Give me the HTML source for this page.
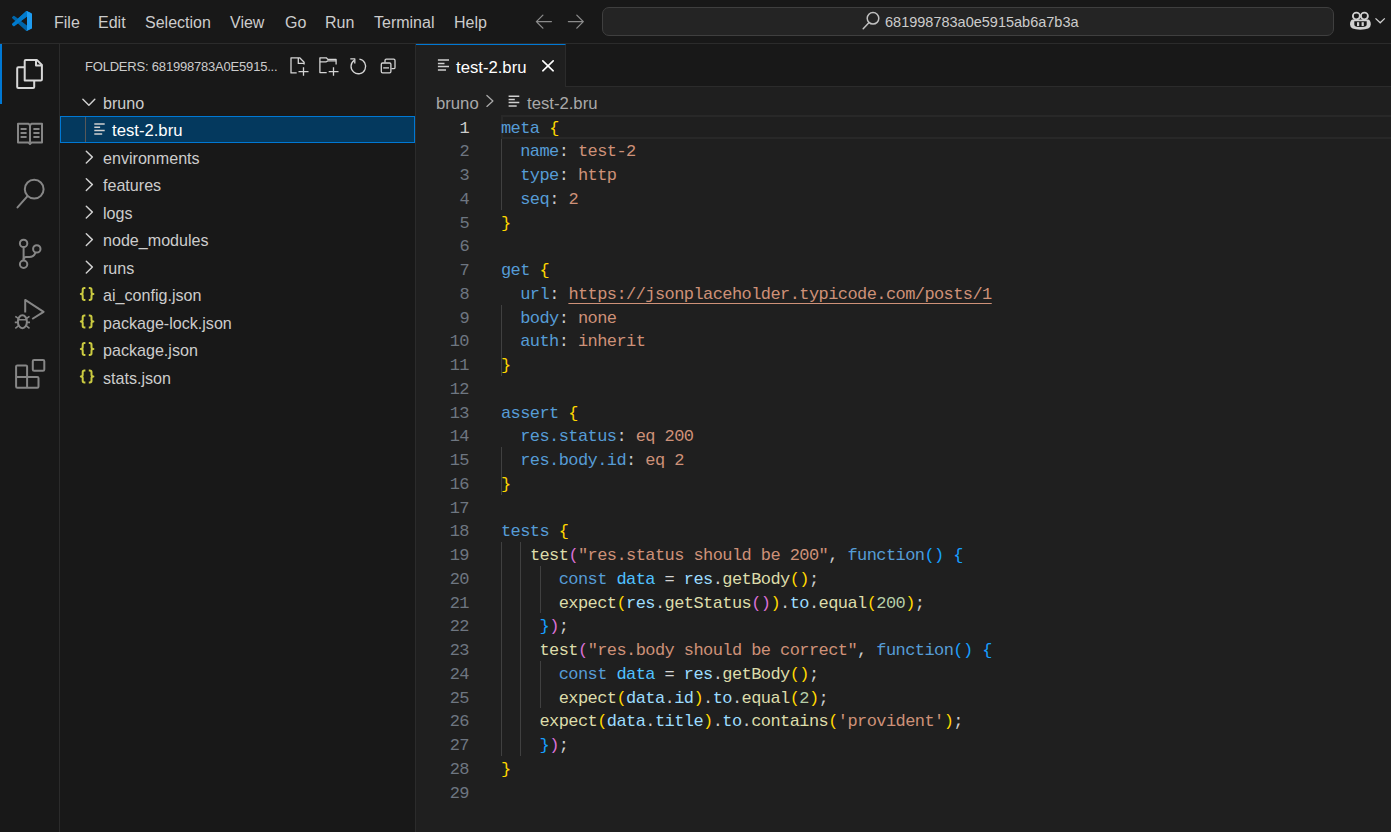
<!DOCTYPE html>
<html><head><meta charset="utf-8">
<style>
*{margin:0;padding:0;box-sizing:border-box}
html,body{width:1391px;height:832px;overflow:hidden;background:#181818;font-family:"Liberation Sans",sans-serif;color:#cccccc}
.a{position:absolute}
.ui{white-space:nowrap;font-size:16px;color:#cccccc}
#title{left:0;top:0;width:1391px;height:44px;background:#181818;border-bottom:1px solid #2b2b2b}
#search{left:602px;top:7px;width:732px;height:29px;background:#242424;border:1px solid #3f3f3f;border-radius:7px}
#act{left:0;top:44px;width:60px;height:788px;background:#181818;border-right:1px solid #2b2b2b}
#side{left:60px;top:44px;width:356px;height:788px;background:#181818;border-right:1px solid #2b2b2b}
#tabs{left:416px;top:44px;width:975px;height:43px;background:#181818;border-bottom:1px solid #2b2b2b}
#tab{left:416px;top:44px;width:150px;height:43px;background:#1f1f1f;border-top:1px solid #0078d4;border-right:1px solid #2b2b2b}
#editor{left:416px;top:87px;width:975px;height:745px;background:#1f1f1f}
.m{top:1.3px;height:43px;line-height:43px}
.row{left:103px;height:27.5px;line-height:27.5px;font-size:16.1px}
.code{font-family:"Liberation Mono",monospace;font-size:17px;letter-spacing:-0.58px}
.code div{white-space:pre;height:23.75px}
.ln{left:416px;width:53px;text-align:right;color:#6e7681;line-height:23.75px}
.cl{left:501px;line-height:23.75px;color:#cccccc}
.k{color:#569cd6}.s{color:#ce9178}.f{color:#dcdcaa}.v{color:#9cdcfe}.c{color:#4fc1ff}.n{color:#b5cea8}
.b1{color:#ffd700}.b2{color:#da70d6}.b3{color:#179fff}.p{color:#d4d4d4}
.g{width:1px;background:#404040}
</style></head><body>
<div id="title" class="a"></div>
<div id="search" class="a"></div>
<div id="act" class="a"></div>
<div class="a" style="left:0;top:44px;width:2px;height:60px;background:#0078d4"></div>
<div id="side" class="a"></div>
<div id="tabs" class="a"></div>
<div id="tab" class="a"></div>
<div id="editor" class="a"></div>

<!-- menu -->
<div class="a ui m" style="left:54px">File</div>
<div class="a ui m" style="left:98px">Edit</div>
<div class="a ui m" style="left:145px">Selection</div>
<div class="a ui m" style="left:230px">View</div>
<div class="a ui m" style="left:285px">Go</div>
<div class="a ui m" style="left:325px">Run</div>
<div class="a ui m" style="left:374px">Terminal</div>
<div class="a ui m" style="left:454px">Help</div>
<div class="a ui" style="left:885px;top:1px;height:43px;line-height:43px;font-size:14.5px">681998783a0e5915ab6a7b3a</div>

<!-- sidebar header -->
<div class="a ui" style="left:85px;top:45px;height:44px;line-height:44px;font-size:13px;letter-spacing:-0.2px">FOLDERS: 681998783A0E5915...</div>

<!-- explorer rows -->
<div class="a" style="left:60px;top:116px;width:355px;height:27px;background:#04395e;border:1px solid #0078d4"></div>
<div class="a g" style="left:85px;top:117px;height:25px;background:#585858"></div>
<div class="a ui row" style="top:89.5px">bruno</div>
<div class="a ui row" style="top:117px;left:112px;color:#ffffff;font-size:16.7px">test-2.bru</div>
<div class="a ui row" style="top:144.5px">environments</div>
<div class="a ui row" style="top:172px">features</div>
<div class="a ui row" style="top:199.5px">logs</div>
<div class="a ui row" style="top:227px">node_modules</div>
<div class="a ui row" style="top:254.5px">runs</div>
<div class="a ui row" style="top:282px">ai_config.json</div>
<div class="a ui row" style="top:309.5px">package-lock.json</div>
<div class="a ui row" style="top:337px">package.json</div>
<div class="a ui row" style="top:364.5px">stats.json</div>

<!-- tab + breadcrumbs -->
<div class="a ui" style="left:456px;top:46px;height:43px;line-height:43px;font-size:16.7px;color:#ffffff">test-2.bru</div>
<div class="a ui" style="left:436px;top:89px;height:29px;line-height:29px;font-size:16.7px;color:#a9a9a9">bruno</div>
<div class="a ui" style="left:527px;top:89px;height:29px;line-height:29px;font-size:16.7px;color:#a9a9a9">test-2.bru</div>

<!-- indent guides -->
<div class="a g" style="left:501px;top:139px;height:71px"></div>
<div class="a g" style="left:501px;top:305px;height:71px"></div>
<div class="a g" style="left:501px;top:447px;height:48px"></div>
<div class="a g" style="left:501px;top:542px;height:214px"></div>
<div class="a g" style="left:520px;top:542px;height:214px"></div>
<div class="a g" style="left:540px;top:566px;height:47px"></div>
<div class="a g" style="left:540px;top:661px;height:47px"></div>

<!-- current line highlight -->
<div class="a" style="left:501px;top:115px;width:890px;height:24px;border:2px solid #282828;border-right:none"></div>

<!-- line numbers -->
<div class="a code ln" style="top:116.5px">
<div style="color:#cccccc">1</div><div>2</div><div>3</div><div>4</div><div>5</div><div>6</div><div>7</div><div>8</div><div>9</div><div>10</div><div>11</div><div>12</div><div>13</div><div>14</div><div>15</div><div>16</div><div>17</div><div>18</div><div>19</div><div>20</div><div>21</div><div>22</div><div>23</div><div>24</div><div>25</div><div>26</div><div>27</div><div>28</div><div>29</div>
</div>

<div class="a code cl" style="top:116.5px">
<div><span class="k">meta</span> <span class="b1">{</span></div>
<div>  <span class="k">name</span>: <span class="s">test-2</span></div>
<div>  <span class="k">type</span>: <span class="s">http</span></div>
<div>  <span class="k">seq</span>: <span class="s">2</span></div>
<div><span class="b1">}</span></div>
<div> </div>
<div><span class="k">get</span> <span class="b1">{</span></div>
<div>  <span class="k">url</span>: <span class="s" style="text-decoration:underline;text-underline-offset:4px;text-decoration-skip-ink:none">https://jsonplaceholder.typicode.com/posts/1</span></div>
<div>  <span class="k">body</span>: <span class="s">none</span></div>
<div>  <span class="k">auth</span>: <span class="s">inherit</span></div>
<div><span class="b1">}</span></div>
<div> </div>
<div><span class="k">assert</span> <span class="b1">{</span></div>
<div>  <span class="k">res.status</span>: <span class="s">eq 200</span></div>
<div>  <span class="k">res.body.id</span>: <span class="s">eq 2</span></div>
<div><span class="b1">}</span></div>
<div> </div>
<div><span class="k">tests</span> <span class="b1">{</span></div>
<div>   <span class="f">test</span><span class="b2">(</span><span class="s">"res.status should be 200"</span>, <span class="k">function</span><span class="b3">()</span> <span class="b3">{</span></div>
<div>      <span class="k">const</span> <span class="c">data</span> <span class="p">=</span> <span class="v">res</span>.<span class="f">getBody</span><span class="b1">()</span>;</div>
<div>      <span class="f">expect</span><span class="b1">(</span><span class="v">res</span>.<span class="f">getStatus</span><span class="b2">()</span><span class="b1">)</span>.<span class="v">to</span>.<span class="f">equal</span><span class="b1">(</span><span class="n">200</span><span class="b1">)</span>;</div>
<div>    <span class="b3">}</span><span class="b2">)</span>;</div>
<div>    <span class="f">test</span><span class="b2">(</span><span class="s">"res.body should be correct"</span>, <span class="k">function</span><span class="b3">()</span> <span class="b3">{</span></div>
<div>      <span class="k">const</span> <span class="c">data</span> <span class="p">=</span> <span class="v">res</span>.<span class="f">getBody</span><span class="b1">()</span>;</div>
<div>      <span class="f">expect</span><span class="b1">(</span><span class="v">data</span>.<span class="v">id</span><span class="b1">)</span>.<span class="v">to</span>.<span class="f">equal</span><span class="b1">(</span><span class="n">2</span><span class="b1">)</span>;</div>
<div>    <span class="f">expect</span><span class="b1">(</span><span class="v">data</span>.<span class="v">title</span><span class="b1">)</span>.<span class="v">to</span>.<span class="f">contains</span><span class="b1">(</span><span class="s">'provident'</span><span class="b1">)</span>;</div>
<div>    <span class="b3">}</span><span class="b2">)</span>;</div>
<div><span class="b1">}</span></div>
<div> </div>
</div>

<!-- ICON OVERLAY -->
<svg class="a" style="left:0;top:0" width="1391" height="832" viewBox="0 0 1391 832" fill="none">
<!-- vscode logo -->
<g transform="translate(12,11) scale(0.2)">
<path fill="#0065a9" d="M96.46 10.8 75.86.87a6.23 6.23 0 0 0-7.1 1.2L29.35 38.04 12.19 25.01a4.16 4.16 0 0 0-5.32.24L1.36 30.26a4.16 4.16 0 0 0 0 6.16L16.23 50 1.36 63.58a4.16 4.16 0 0 0 0 6.16l5.51 5.01a4.16 4.16 0 0 0 5.32.24l17.16-13.03 39.41 35.96a6.22 6.22 0 0 0 7.1 1.2l20.6-9.92A6.25 6.25 0 0 0 100 83.6V16.4a6.25 6.25 0 0 0-3.54-5.6zM75.02 72.7 45.11 50l29.91-22.7z"/>
<path fill="#007acc" d="M96.46 10.8 75.86.87a6.23 6.23 0 0 0-7.1 1.2L1.36 63.58a4.16 4.16 0 0 0 0 6.16l5.51 5.01a4.16 4.16 0 0 0 5.32.24L93.39 13.23A4.16 4.16 0 0 1 100 16.4v-.2a6.25 6.25 0 0 0-3.54-5.4z"/>
<path fill="#1f9cf0" d="M75.86 99.13a6.22 6.22 0 0 1-7.1-1.2c2.3 2.3 6.24.67 6.24-2.58V4.65c0-3.25-3.94-4.88-6.24-2.58a6.23 6.23 0 0 1 7.1-1.2l20.6 9.91A6.25 6.25 0 0 1 100 16.4v67.2a6.25 6.25 0 0 1-3.54 5.62z"/>
</g>
<!-- nav arrows -->
<g stroke="#8b8b8b" stroke-width="1.3" stroke-linecap="round" stroke-linejoin="round">
<path d="M542.9 15.1 536.4 21.6 542.9 28.1M536.4 21.6H551.4"/>
<path d="M576.8 15.1 583.3 21.6 576.8 28.1M568.4 21.6H583.3"/>
</g>
<!-- search icon -->
<g stroke="#c0c0c0" stroke-width="1.5" stroke-linecap="round">
<circle cx="873" cy="18.3" r="5.8"/>
<path d="M868.6 22.9 863.2 28.8"/>
</g>
<!-- copilot -->
<g fill="#d0d0d0">
<path fill-rule="evenodd" d="M1350 24.6Q1350 20.4 1352.6 19.6H1368.2Q1370.8 20.4 1370.8 24.6Q1370.8 29.8 1360.4 29.8Q1350 29.8 1350 24.6ZM1354.3 21.3H1366.7V24.4Q1366.7 27 1360.5 27Q1354.3 27 1354.3 24.4Z"/>
<rect x="1357" y="22.2" width="2.2" height="3.9"/>
<rect x="1361.6" y="22.2" width="2.2" height="3.9"/>
</g>
<g stroke="#d0d0d0" fill="none">
<ellipse cx="1356.4" cy="16" rx="3.5" ry="3.35" stroke-width="1.9"/>
<ellipse cx="1364.4" cy="16" rx="3.5" ry="3.35" stroke-width="1.9"/>
<path d="M1375.5 18.4 1380.2 22.8 1384.8 18.4" stroke-width="1.3"/>
</g>
<!-- activity bar icons -->
<g stroke="#d7d7d7" stroke-width="2" stroke-linejoin="round">
<path d="M24.7 80.6V61Q24.7 59.9 25.8 59.9H36.8L41.9 65V79.5Q41.9 80.6 40.8 80.6Z"/>
<path d="M36 60V65.6H42"/>
<path d="M24.7 67.3H18.3Q17.2 67.3 17.2 68.4V86.9Q17.2 88 18.3 88H33.1Q34.2 88 34.2 86.9V80.6"/>
</g>
<g stroke="#868686" stroke-width="2" stroke-linejoin="round">
<path d="M18 123.8H28.5L30 125.3 31.5 123.8H42V142.5H31.5L30 144 28.5 142.5H18Z"/>
<path d="M30 125V142.6"/>
<path d="M20.6 129H26.6M20.6 133H26.6M20.6 137H26.6M33.4 129H39.5M33.4 133H39.5M33.4 137H39.5"/>
</g>
<g stroke="#868686" stroke-width="2" stroke-linecap="round">
<circle cx="34.2" cy="189.2" r="9.4"/>
<path d="M27.5 196.2 17.5 207.4"/>
</g>
<g stroke="#868686" stroke-width="2">
<circle cx="23.6" cy="243.4" r="3.7"/>
<circle cx="23.6" cy="264.3" r="3.7"/>
<circle cx="36.8" cy="248.9" r="3.7"/>
<path d="M23.6 247.1V260.6"/>
<path d="M35.6 252.4Q34 256.9 29.5 256.9H26Q23.6 256.9 23.6 259.5"/>
</g>
<g stroke="#868686" stroke-width="2" stroke-linejoin="round">
<path d="M25.2 312.4V299.9L43.6 311.8 32.2 319"/>
<ellipse cx="22.4" cy="321.7" rx="4.5" ry="6.5"/>
<path d="M18 319.8H27M15.3 316.3 18.6 318.6M29.5 316.3 26.2 318.6M14.8 322.4H17.8M27 322.4H30M15.3 328.3 18.4 325.9M29.5 328.3 26.4 325.9" stroke-width="1.6"/>
</g>
<g stroke="#868686" stroke-width="2" stroke-linejoin="round">
<path d="M16.1 376.9V366.6Q16.1 365.4 17.3 365.4H25.9Q27.1 365.4 27.1 366.6V376.9H37.3Q38.5 376.9 38.5 378.1V386.6Q38.5 387.8 37.3 387.8H17.3Q16.1 387.8 16.1 386.6V376.9H27.1V387.8"/>
<rect x="32.8" y="359.9" width="11.5" height="10.9" rx="1.3"/>
</g>

<!-- explorer toolbar -->
<g stroke="#d4d4d4" stroke-width="1.3" stroke-linejoin="round">
<path d="M296.7 72.9H291V57.8H299.7L304.1 62.2V64.5"/>
<path d="M298.3 57.9V63.4H304"/>
<path d="M303.5 67.3V75.8M298.5 71.7H308.5"/>
<path d="M326.7 72.6H319.9V57.8H326.3L327.8 59.4H336.1V64.5"/>
<path d="M319.9 61.8H326.3L327.8 60.9H336.1"/>
<path d="M333.5 67.3V75.8M328.7 71.7H338.5"/>
<path d="M359.4 59.2A7.3 7.3 0 1 1 354.2 60.4"/>
<path d="M350.3 58.8H354.8V63.4"/>
<rect x="381.3" y="63" width="9.6" height="9.9" rx="1.3"/>
<path d="M385 62.6V60.4Q385 59.1 386.3 59.1H393.7Q395 59.1 395 60.4V67.4Q395 68.7 393.7 68.7H391.4"/>
<path d="M383.2 67.9H389"/>
</g>
<!-- explorer row icons -->
<g stroke="#d0d0d0" stroke-width="1.45" stroke-linecap="round" stroke-linejoin="round">
<path d="M82.9 99.3 88.9 105.2 94.8 99.3"/>
<path d="M86.3 151.3 92.4 157.1 86.3 163"/>
<path d="M86.3 178.8 92.4 184.6 86.3 190.5"/>
<path d="M86.3 206.3 92.4 212.1 86.3 218"/>
<path d="M86.3 233.8 92.4 239.6 86.3 245.5"/>
<path d="M86.3 261.3 92.4 267.1 86.3 273"/>
</g>
<g stroke="#d0d0d0" stroke-width="1.5">
<path d="M94.3 124H104.7M94.3 127.3H100.1M94.3 130.6H104.7M94.3 134H102.2"/>
<path d="M437.9 60.1H449M437.9 63.4H444.5M437.9 66.6H449M437.9 69.9H446"/>
<path d="M508.6 96.2H519.3M508.6 99.4H514.8M508.6 102.6H519.3M508.6 105.9H516.7"/>
</g>
<g stroke="#a9a9a9" stroke-width="1.3" stroke-linecap="round" stroke-linejoin="round">
<path d="M486.9 95.4 492.9 100.9 486.9 106.4"/>
</g>
<g stroke="#ffffff" stroke-width="1.6" stroke-linecap="round">
<path d="M542.8 60.9 553.2 70.8M553.2 60.9 542.8 70.8"/>
</g>
<!-- json icons -->
<g stroke="#cbcb41" stroke-width="2" stroke-linejoin="round" id="jsn">
<path d="M85.4 288.1H84.4Q82.7 288.1 82.7 289.8V292.3Q82.7 293.9 80.8 293.9Q82.7 293.9 82.7 295.5V298.2Q82.7 299.9 84.4 299.9H85.4"/>
<path d="M88.8 288.1H89.8Q91.5 288.1 91.5 289.8V292.3Q91.5 293.9 93.4 293.9Q91.5 293.9 91.5 295.5V298.2Q91.5 299.9 89.8 299.9H88.8"/>
</g>
<use href="#jsn" y="27.5"/>
<use href="#jsn" y="55"/>
<use href="#jsn" y="82.5"/>
</svg>
</body></html>
